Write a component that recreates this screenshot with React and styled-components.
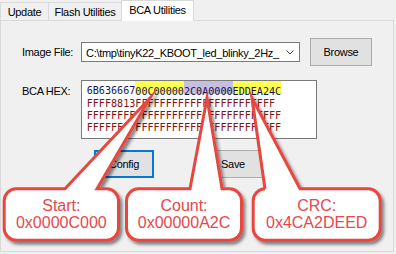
import React from "react";
import styled, { createGlobalStyle } from "styled-components";

const GlobalStyle = createGlobalStyle`
  html, body { margin: 0; padding: 0; background: #f0f0f0; }
  body { font-family: "Liberation Sans", Arial, sans-serif; }
`;

const Root = styled.div`
  position: relative;
  width: 396px;
  height: 254px;
  overflow: hidden;
  background: #f0f0f0;
  font-family: "Liberation Sans", Arial, sans-serif;
  font-size: 11px;
  letter-spacing: -0.3px;
  color: #000;
`;

const TabStrip = styled.div`
  display: flex;
  align-items: flex-end;
  height: 21px;
  position: relative;
  z-index: 2;
`;

const Tab = styled.div`
  box-sizing: border-box;
  width: ${(p) => p.$w}px;
  height: ${(p) => (p.$active ? 21 : 18)}px;
  margin-left: ${(p) => (p.$first ? 0 : -1)}px;
  margin-bottom: ${(p) => (p.$active ? 0 : 1)}px;
  border: 1px solid #d9d9d9;
  border-bottom: none;
  background: ${(p) => (p.$active ? "#ffffff" : "#f0f0f0")};
  display: flex;
  align-items: center;
  justify-content: center;
  padding-bottom: ${(p) => (p.$active ? 2 : 0)}px;
  font-size: 11px;
  color: #000;
  white-space: nowrap;
`;

const Panel = styled.div`
  box-sizing: border-box;
  width: 394px;
  height: 232px;
  margin-top: -1px;
  border: 1px solid #d9d9d9;
  background: #f0f0f0;
  padding: 17px 0 0 21px;
  position: relative;
  z-index: 1;
`;

const Row = styled.div`
  display: flex;
  align-items: ${(p) => (p.$top ? "flex-start" : "center")};
  margin-top: ${(p) => p.$mt || 0}px;
`;

const Label = styled.div`
  width: 59px;
  flex: none;
  line-height: 13px;
  padding-top: ${(p) => p.$pt || 0}px;
  white-space: nowrap;
`;

const Combo = styled.div`
  box-sizing: border-box;
  width: 219px;
  height: 20px;
  border: 1px solid #7a7a7a;
  background: #fff;
  display: flex;
  align-items: center;
  padding-left: 4px;
  padding-right: 5px;
`;

const ComboText = styled.span`
  flex: 1;
  overflow: hidden;
  white-space: nowrap;
  padding-top: 1px;
`;

const Button = styled.div`
  box-sizing: border-box;
  flex: none;
  width: ${(p) => p.$w}px;
  height: 28px;
  margin-left: ${(p) => p.$ml || 0}px;
  background: #e1e1e1;
  border: ${(p) => (p.$focused ? "2px solid #0078d7" : "1px solid #adadad")};
  display: flex;
  align-items: center;
  justify-content: center;
  white-space: nowrap;
`;

const HexBox = styled.div`
  box-sizing: border-box;
  width: 236px;
  height: 59px;
  border: 1px solid #7a7a7a;
  background: #fff;
  overflow: hidden;
  padding: 4.4px 0 0 4.7px;
  font-family: "DejaVu Sans Mono", monospace;
  font-size: 10.1px;
  letter-spacing: 0;
  line-height: 12.3px;
  white-space: pre;
`;

const HexLine = styled.div`
  color: ${(p) => (p.$first ? "#141450" : "#861212")};
`;

const Hl = styled.span`
  padding-top: 4.6px;
  background: linear-gradient(
    to bottom,
    ${(p) => p.$c} 0,
    ${(p) => p.$c} calc(100% - 2.4px),
    transparent calc(100% - 2.4px)
  );
`;

const Overlay = styled.svg`
  position: absolute;
  left: 0;
  top: 0;
  z-index: 5;
  pointer-events: none;
`;

const CalloutText = styled.div`
  position: absolute;
  z-index: 6;
  display: flex;
  flex-direction: column;
  align-items: center;
  justify-content: center;
  font-family: "Liberation Sans", Arial, sans-serif;
  font-size: 16px;
  line-height: 17px;
  letter-spacing: 0;
  color: #e8474c;
`;

const callouts = [
  { x0: 4.2, y0: 188.8, x1: 118.5, y1: 240.2, b1: 65, b2: 97, tx: 150, ty: 98, l1: "Start:", l2: "0x0000C000" },
  { x0: 126.5, y0: 188.8, x1: 241.5, y1: 240.2, b1: 190, b2: 222, tx: 207, ty: 98, l1: "Count:", l2: "0x00000A2C" },
  { x0: 253.2, y0: 188.8, x1: 380.2, y1: 240.2, b1: 265, b2: 300, tx: 252, ty: 98, l1: "CRC:", l2: "0x4CA2DEED" },
];

function calloutPath({ x0, y0, x1, y1, b1, b2, tx, ty }) {
  const r = 12;
  return `M ${x0 + r} ${y0} L ${b1} ${y0} L ${tx} ${ty} L ${b2} ${y0} L ${x1 - r} ${y0}
    A ${r} ${r} 0 0 1 ${x1} ${y0 + r} L ${x1} ${y1 - r}
    A ${r} ${r} 0 0 1 ${x1 - r} ${y1} L ${x0 + r} ${y1}
    A ${r} ${r} 0 0 1 ${x0} ${y1 - r} L ${x0} ${y0 + r}
    A ${r} ${r} 0 0 1 ${x0 + r} ${y0} Z`;
}

export default function App() {
  return (
    <Root>
      <GlobalStyle />
      <TabStrip>
        <Tab $w={49} $first>Update</Tab>
        <Tab $w={74}>Flash Utilities</Tab>
        <Tab $w={73} $active>BCA Utilities</Tab>
      </TabStrip>
      <Panel>
        <Row>
          <Label>Image File:</Label>
          <Combo>
            <ComboText>C:\tmp\tinyK22_KBOOT_led_blinky_2Hz_</ComboText>
            <svg width="8" height="5" viewBox="0 0 8 5">
              <polyline points="0.5,0.5 4,4 7.5,0.5" fill="none" stroke="#444" strokeWidth="1" />
            </svg>
          </Combo>
          <Button $w={62} $ml={10}>Browse</Button>
        </Row>
        <Row $top $mt={14}>
          <Label $pt={5}>BCA HEX:</Label>
          <HexBox>
            <HexLine $first>
              6B636667
              <Hl $c="#ffff52">00C00000</Hl>
              <Hl $c="#c6bfdf">2C0A0000</Hl>
              <Hl $c="#ffff52">EDDEA24C</Hl>
            </HexLine>
            <HexLine>FFFF8813FFFFFFFFFFFFFFFFFFFFFFF</HexLine>
            <HexLine>FFFFFFFFFFFFFFFFFFFFFFFFFFFFFFFF</HexLine>
            <HexLine>FFFFFFFFFFFFFFFFFFFFFFFFFFFFFFFF</HexLine>
          </HexBox>
        </Row>
        <Row $mt={11}>
          <Button $w={60} $ml={72} $focused>Config</Button>
          <Button $w={60} $ml={49}>Save</Button>
        </Row>
      </Panel>
      <Overlay width="396" height="254" viewBox="0 0 396 254">
        <defs>
          <filter id="sh" x="-20%" y="-20%" width="140%" height="140%">
            <feDropShadow dx="2.5" dy="3" stdDeviation="1.4" floodColor="#000" floodOpacity="0.45" />
          </filter>
        </defs>
        {callouts.map((c, i) => (
          <path
            key={i}
            d={calloutPath(c)}
            fill="#fff"
            stroke="#e8463f"
            strokeWidth="3"
            strokeLinejoin="miter"
            strokeMiterlimit="20"
            filter="url(#sh)"
          />
        ))}
      </Overlay>
      {callouts.map((c, i) => (
        <CalloutText
          key={i}
          style={{ left: c.x0, top: c.y0, width: c.x1 - c.x0, height: c.y1 - c.y0 }}
        >
          <div>{c.l1}</div>
          <div>{c.l2}</div>
        </CalloutText>
      ))}
    </Root>
  );
}
